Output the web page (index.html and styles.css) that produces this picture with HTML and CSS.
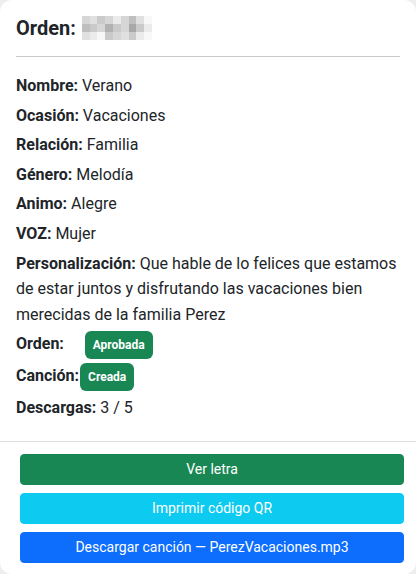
FILE: index.html
```html
<!DOCTYPE html>
<html lang="es">
<head>
    <meta charset="UTF-8">
    <meta name="viewport" content="width=device-width, initial-scale=1.0">
    <title>Detalle de orden</title>
    <link rel="stylesheet" href="styles.css">
</head>
<body>
    <div class="card">
        <div class="card-body">
            <h5 class="card-title">Orden: <span class="mosaic">
                <i class="g3"></i><i class="g2"></i><i class="g4"></i><i class="g3"></i><i class="g1"></i><i class="g3"></i><i class="g5"></i><i class="g2"></i><i class="g0"></i>
                <i class="g5"></i><i class="g4"></i><i class="g3"></i><i class="g6"></i><i class="g4"></i><i class="g3"></i><i class="g7"></i><i class="g4"></i><i class="g1"></i>
                <i class="g2"></i><i class="g1"></i><i class="g0"></i><i class="g4"></i><i class="g3"></i><i class="g2"></i><i class="g4"></i><i class="g1"></i><i class="g0"></i>
            </span></h5>
            <hr>
            <p><strong>Nombre:</strong> Verano</p>
            <p><strong>Ocasión:</strong> Vacaciones</p>
            <p><strong>Relación:</strong> Familia</p>
            <p><strong>Género:</strong> Melodía</p>
            <p><strong>Animo:</strong> Alegre</p>
            <p><strong>VOZ:</strong> Mujer</p>
            <p><strong>Personalización:</strong> Que hable de lo felices que estamos de estar juntos y disfrutando las vacaciones bien merecidas de la familia Perez</p>
            <p><strong>Orden:</strong>&nbsp;&nbsp;&nbsp;&nbsp; <span class="badge">Aprobada</span></p>
            <p><strong>Canción:</strong><span class="badge">Creada</span></p>
            <p><strong>Descargas:</strong> 3 / 5</p>
        </div>
        <div class="card-footer">
            <button class="btn btn-success">Ver letra</button>
            <button class="btn btn-info">Imprimir código QR</button>
            <button class="btn btn-primary">Descargar canción — PerezVacaciones.mp3</button>
        </div>
    </div>
</body>
</html>
```

FILE: styles.css
```css
body {
    margin: 0;
    background-color: #eceef0;
    font-family: Roboto, "Liberation Sans", Arial, sans-serif;
    color: #212529;
}
.card {
    height: 574px;
    box-sizing: border-box;
    background-color: #fff;
    border-radius: 12px;
    display: flex;
    flex-direction: column;
}
.card-body {
    padding: 16px 16px 14px;
    font-size: 16px;
    line-height: 1.6;
}
.card-title {
    margin: 0;
    font-size: 20px;
    font-weight: 700;
    line-height: 24px;
    display: flex;
    align-items: center;
}
.mosaic {
    display: grid;
    grid-template-columns: repeat(9, 7.8px);
    grid-template-rows: repeat(3, 8px);
    margin-left: 6px;
}
.mosaic i { display: block; }
.g0 { background: #f8f8f8; }
.g1 { background: #ebebeb; }
.g2 { background: #e0e0e0; }
.g3 { background: #d6d6d6; }
.g4 { background: #cacaca; }
.g5 { background: #bfbfbf; }
.g6 { background: #b2b2b2; }
.g7 { background: #a8a8a8; }
hr {
    margin: 16px 0 16px;
    border: 0;
    border-top: 1px solid #c9cacc;
}
p {
    margin: 0 0 4px;
}
strong {
    font-weight: 700;
}
.badge {
    display: inline-block;
    padding: 8px 8px;
    font-size: 12px;
    font-weight: 700;
    line-height: 1;
    color: #fff;
    background-color: #198754;
    border-radius: 6px;
    vertical-align: middle;
    margin-left: 1px;
}
.card-footer {
    border-top: 1px solid #dcdde0;
    padding: 12px 12px 11px 20px;
    display: flex;
    flex-direction: column;
    gap: 8px;
    margin-top: auto;
}
.btn {
    width: 384px;
    padding: 4px 8px;
    font-family: inherit;
    font-size: 14px;
    line-height: 21px;
    color: #fff;
    border: 1px solid transparent;
    border-radius: 4px;
    cursor: pointer;
}
.btn-success { background-color: #198754; border-color: #198754; }
.btn-info { background-color: #0dcaf0; border-color: #0dcaf0; }
.btn-primary { background-color: #0d6efd; border-color: #0d6efd; }
```
